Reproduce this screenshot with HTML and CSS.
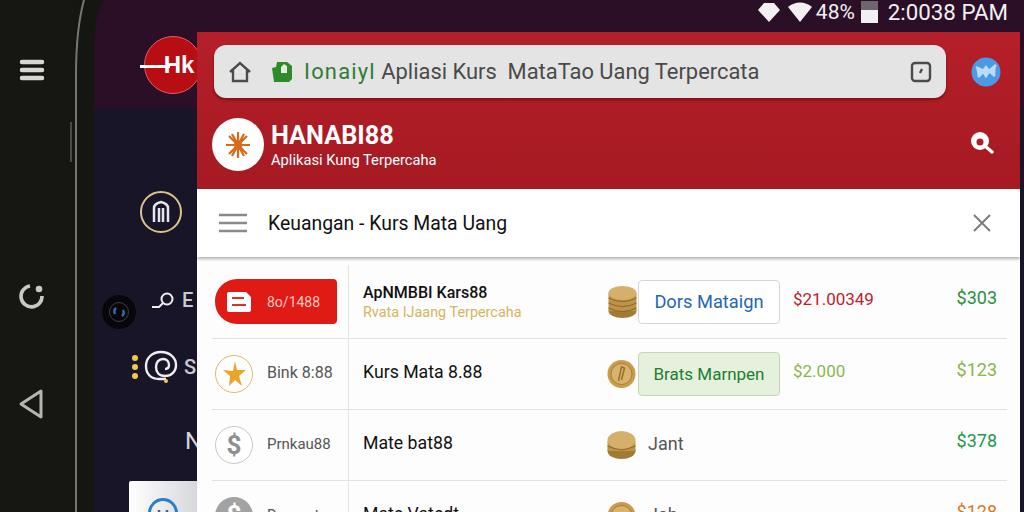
FILE: index.html
```html
<!DOCTYPE html>
<html lang="id">
<head>
<meta charset="utf-8">
<title>HANABI88</title>
<link rel="stylesheet" href="styles.css">
</head>
<body>
<div class="stage">
  <aside class="rail">
    <svg class="rail-menu" width="26" height="22" viewBox="0 0 26 22"><path d="M3 3h20M3 11h20M3 19h20" stroke="#d8d8d2" stroke-width="4.5" stroke-linecap="round" fill="none"/></svg>
    <svg class="rail-reload" width="28" height="28" viewBox="0 0 28 28"><path d="M12 4A10.500 10.500 0 1 0 24 14" stroke="#c9c9c3" stroke-width="3.600" fill="none"/><circle cx="21" cy="7" r="3.300" fill="#c9c9c3"/></svg>
    <svg class="rail-back" width="26" height="32" viewBox="0 0 26 32"><path d="M23 3L3 16l20 13z" stroke="#b5b5af" stroke-width="3" stroke-linejoin="round" fill="none"/></svg>
    <span class="side-key"></span>
  </aside>
  <svg class="bezel" width="20" height="512" viewBox="0 0 20 512"><path d="M10 0C4 22 2 45 2 75V512" stroke="#77776f" stroke-width="2" fill="none"/></svg>
  <main class="screen">
    <div class="screen-top">
      <div class="logo-disc"><span>Hk</span><i></i></div>
      <div class="status">
        <svg width="24" height="22" viewBox="0 0 24 22"><path d="M12 21L1 9l6-7h10l6 7z" fill="#f2f0f2"/></svg>
        <svg width="26" height="22" viewBox="0 0 26 22"><path d="M13 21L1 6c7-6 17-6 24 0z" fill="#f2f0f2"/></svg>
        <span class="pct">48%</span>
        <span class="battery"></span>
        <span class="clock">2:0038 PAM</span>
      </div>
    </div>
    <div class="screen-body">
      <div class="pin-ring"><svg width="22" height="24" viewBox="0 0 22 24"><path d="M4 22V8c0-3 3-5 7-6 4 1 7 3 7 6v14M9 22V8M13 22V8" stroke="#e6e6ef" stroke-width="2.500" fill="none"/></svg></div>
      <div class="side-item search-line"><svg width="26" height="20" viewBox="0 0 26 20"><circle cx="17" cy="9" r="5.500" stroke="#eee" stroke-width="2" fill="none"/><path d="M13 13l-4 4H2" stroke="#eee" stroke-width="2" fill="none"/></svg><span>E</span></div>
      <div class="lens"><svg width="22" height="22" viewBox="0 0 22 22"><circle cx="11" cy="11" r="9.500" stroke="#3a3f4a" fill="none"/><path d="M7 13a5 5 0 0 1 1-6M15 9a5 5 0 0 1-1 6" stroke="#2f6db5" stroke-width="2.400" fill="none"/></svg></div>
      <div class="side-item swirl-line">
        <span class="dots"><i></i><i></i><i></i></span>
        <svg width="34" height="34" viewBox="0 0 34 34"><path d="M22 29H15C7 29 2 24 2 16S8 2 17 2s15 6 15 13-5 11-11 11-9-4-9-9 3-8 7-8 6 3 6 6-2 4-4 4" stroke="#eee" stroke-width="2.400" fill="none"/><circle cx="22" cy="31" r="2" fill="#f3c64e"/></svg>
        <span>S</span>
      </div>
      <div class="side-n">N</div>
      <div class="mini-card"><svg width="32" height="32" viewBox="0 0 32 32"><circle cx="16" cy="16" r="13.500" stroke="#2b7fc4" stroke-width="3" fill="none"/><path d="M12 13v9M20 13v9" stroke="#55606b" stroke-width="2.500"/></svg></div>
    </div>
    <section class="card">
      <header class="red-head">
        <div class="url-row">
          <div class="url-bar">
            <svg class="home" width="24" height="24" viewBox="0 0 24 24"><path d="M2 12L12 3l10 9M5 10v11h14V10" stroke="#4b4b4b" stroke-width="2.400" fill="none"/></svg>
            <svg class="lock" width="22" height="22" viewBox="0 0 22 22"><path d="M1 7l4-1 1-5h10l5 4v13l-3 3H3z" fill="#2f8a2a"/><path d="M10 6l3-3 3 2v7h-6z" fill="#dfeedd"/></svg>
            <span class="url-text"><span class="url-green">Ionaiyl</span> Apliasi Kurs&nbsp; MataTao Uang Terpercata</span>
            <svg class="tab-icon" width="22" height="22" viewBox="0 0 22 22"><rect x="2" y="2" width="18" height="18" rx="3" stroke="#4b4b4b" stroke-width="2.400" fill="none"/><path d="M10 12l2-4" stroke="#4b4b4b" stroke-width="2.400"/></svg>
          </div>
          <svg class="globe" width="30" height="30" viewBox="0 0 30 30"><circle cx="15" cy="15" r="14.500" fill="#4a9be6"/><path d="M5 10l8 4-6 6M25 8l-7 6 6 5M12 14l3 5 3-5-3-4z" stroke="#bcdcf6" stroke-width="2.500" fill="#bcdcf6"/></svg>
        </div>
        <div class="brand-row">
          <div class="brand-disc"><svg width="28" height="28" viewBox="0 0 28 28"><path d="M14 1v26M2 14h24M5 5l18 18M23 5L5 23M8 3l12 22M20 3L8 25" stroke="#d9691b" stroke-width="2.200"/><circle cx="14" cy="14" r="4" fill="#d9691b"/></svg></div>
          <div class="brand-text">
            <strong>HANABI88</strong>
            <span>Aplikasi Kung Terpercaha</span>
          </div>
          <svg class="head-search" width="24" height="24" viewBox="0 0 24 24"><circle cx="10" cy="10" r="9" fill="#fff"/><circle cx="10" cy="11" r="3.500" fill="#b01e28"/><path d="M15 15l7 6" stroke="#fff" stroke-width="3.400" stroke-linecap="round"/></svg>
        </div>
      </header>
      <nav class="nav-bar">
        <svg width="28" height="20" viewBox="0 0 28 20"><path d="M0 2h28M0 10h28M0 18h28" stroke="#8a8a8a" stroke-width="2.500"/></svg>
        <span class="nav-title">Keuangan - Kurs Mata Uang</span>
        <svg width="20" height="20" viewBox="0 0 20 20"><path d="M2 2l16 16M18 2L2 18" stroke="#7d7d7d" stroke-width="2"/></svg>
      </nav>
      <div class="rows">
        <div class="row">
          <div class="cell-a"><div class="red-pill"><svg width="24" height="20" viewBox="0 0 24 20"><path d="M0 2a2 2 0 0 1 2-2h17l5 5v13a2 2 0 0 1-2 2H2a2 2 0 0 1-2-2z" fill="#fff"/><path d="M5 6h12M5 13h14" stroke="#d9312b" stroke-width="2"/></svg><span>8o/1488</span></div></div>
          <div class="cell-b"><b>ApNMBBI Kars88</b><small>Rvata IJaang Terpercaha</small></div>
          <svg class="coin" width="32" height="34" viewBox="0 0 32 34"><ellipse cx="17" cy="26" rx="14" ry="7" fill="#a37a33"/><rect x="3" y="8" width="28" height="18" fill="#bd9447"/><path d="M3 13q14 7 28 0M3 18q14 7 28 0M3 23q14 7 28 0" stroke="#8a6524" fill="none"/><ellipse cx="17" cy="8" rx="14" ry="7" fill="#d5b06a"/></svg>
          <div class="cell-btn"><span class="btn btn-white">Dors Mataign</span></div>
          <span class="price red">$21.00349</span>
          <span class="total green">$303</span>
        </div>
        <div class="row">
          <div class="cell-a"><svg class="bubble" width="38" height="40" viewBox="0 0 38 40"><circle cx="19" cy="20" r="18.500" fill="#fff" stroke="#e2b66f"/><path d="M20 7l2 9 9 0-7 6 3 10-7-6-6 6 1-10-7-6 10 1z" fill="#e9a429"/></svg><span class="bank">Bink 8:88</span></div>
          <div class="cell-b"><b class="plain">Kurs Mata 8.88</b></div>
          <svg class="coin" width="30" height="30" viewBox="0 0 30 30"><circle cx="15" cy="15" r="14" fill="#c99c4d"/><circle cx="15" cy="15" r="10.500" fill="#d8b36e" stroke="#a87b30"/><path d="M12 22l3-14 3 1-3 12" stroke="#9a6f2a" stroke-width="1.500" fill="none"/></svg>
          <div class="cell-btn"><span class="btn btn-green">Brats Marnpen</span></div>
          <span class="price lime">$2.000</span>
          <span class="total lime">$123</span>
        </div>
        <div class="row">
          <div class="cell-a"><svg class="bubble" width="38" height="40" viewBox="0 0 38 40"><circle cx="19" cy="20" r="18.500" fill="#fff" stroke="#c8c8c8"/><text x="19" y="29" text-anchor="middle" class="dollar">$</text></svg><span class="bank tight">Prnkau88</span></div>
          <div class="cell-b"><b class="plain">Mate bat88</b></div>
          <svg class="coin" width="32" height="30" viewBox="0 0 32 30"><ellipse cx="16" cy="21" rx="14" ry="8" fill="#a37a33"/><rect x="2" y="11" width="28" height="10" fill="#bd9447"/><path d="M2 16q14 7 28 0" stroke="#8a6524" fill="none"/><ellipse cx="16" cy="10" rx="14" ry="9" fill="#d5b06a"/></svg>
          <div class="cell-btn"><span class="btn-none">Jant</span></div>
          <span class="price"></span>
          <span class="total green2">$378</span>
        </div>
        <div class="row">
          <div class="cell-a"><svg class="bubble" width="38" height="40" viewBox="0 0 38 40"><circle cx="19" cy="20" r="19" fill="#a3a3a3"/><text x="19" y="28" text-anchor="middle" class="dollar white">$</text></svg><span class="bank tight">Dranaut</span></div>
          <div class="cell-b"><b class="plain">Mate Vatedt</b></div>
          <svg class="coin" width="30" height="30" viewBox="0 0 30 30"><circle cx="15" cy="15" r="14" fill="#c99c4d"/><circle cx="15" cy="15" r="10.500" fill="#d8b36e" stroke="#a87b30"/></svg>
          <div class="cell-btn"><span class="btn-none">Jah</span></div>
          <span class="price"></span>
          <span class="total orange">$128</span>
        </div>
      </div>
    </section>
  </main>
</div>
</body>
</html>
```
FILE: styles.css
```css
* { box-sizing: border-box; }
html, body { margin: 0; height: 512px; overflow: hidden; background: #161612; font-family: Roboto, "Liberation Sans", sans-serif; }
.stage { display: flex; width: 1024px; height: 512px; position: relative; overflow: hidden; background: #151511; }

.rail { width: 74px; flex: none; background: #161612; position: relative; }
.rail svg { position: absolute; }
.rail-menu { left: 19px; top: 59px; }
.rail-reload { left: 18px; top: 282px; }
.rail-back { left: 18px; top: 388px; }
.side-key { position: absolute; right: 2px; top: 122px; width: 2px; height: 40px; background: #4a4a45; }

.bezel { width: 20px; flex: none; background: #151511; }

.screen { flex: 1; position: relative; display: flex; flex-direction: column; background: #191528; border-top-left-radius: 12px 50px; overflow: hidden; }
.screen-top { height: 108px; background: #2a0f26; flex: none; display: flex; justify-content: flex-end; position: relative; }
.screen-body { flex: 1; position: relative; }

.status { position: absolute; right: 16px; top: 0; height: 24px; display: flex; align-items: center; color: #f2f0f2; }
.status svg { margin-right: 6px; }
.status svg + svg { margin-right: 3px; }
.pct { margin-right: 6px; font-size: 21px; }
.battery { width: 17px; height: 22px; margin-right: 10px; background: linear-gradient(#6f6570 0 42%, #f2f0f2 42%); }
.clock { font-size: 22.300px; }

.logo-disc { position: absolute; left: 50px; top: 36px; width: 58px; height: 58px; border-radius: 50%; background: #b80d12; border: 1px solid #d9606a; color: #fff; font: 700 24px/56px "Liberation Sans", sans-serif; text-align: center; }
.logo-disc span { display: block; padding-left: 12px; }
.logo-disc i { position: absolute; left: -5px; top: 28px; width: 30px; height: 3px; background: #fff; }

.pin-ring { position: absolute; left: 46px; top: 83px; width: 42px; height: 42px; border-radius: 50%; border: 2px solid #d9c58c; display: flex; align-items: center; justify-content: center; }
.lens { position: absolute; left: 8px; top: 187px; width: 34px; height: 34px; border-radius: 50%; background: #07070a; display: flex; align-items: center; justify-content: center; }
.side-item { position: absolute; display: flex; align-items: center; gap: 6px; color: #c9c9d2; font-size: 20px; font-weight: 500; }
.search-line { left: 56px; top: 180px; }
.swirl-line { left: 38px; top: 242px; gap: 6px; }
.dots { display: flex; flex-direction: column; gap: 3px; }
.dots i { width: 6px; height: 6px; border-radius: 50%; background: #f3c64e; }
.side-n { position: absolute; left: 91px; top: 319px; color: #d5d5dc; font-size: 24px; }
.mini-card { position: absolute; left: 35px; top: 373px; width: 80px; height: 60px; background: linear-gradient(90deg, #fff, #cfd0d6); padding: 16px 0 0 18px; border-radius: 2px; }

.card { position: absolute; left: 103px; top: 32px; width: 823px; height: 500px; background: #fdfdfd; display: flex; flex-direction: column; border-radius: 3px 3px 0 0; }
.red-head { height: 157px; flex: none; background: linear-gradient(#b51f2a, #a61a22); padding: 13px 19px 0 17px; display: flex; flex-direction: column; }
.url-row { display: flex; align-items: center; justify-content: space-between; }
.url-bar { width: 732px; height: 53px; background: #e4e4e4; border-radius: 12px; display: flex; align-items: center; padding: 0 14px; box-shadow: 0 2px 3px rgba(60,0,0,.45); }
.home { flex: none; }
.lock { flex: none; margin-left: 19px; }
.url-text { flex: 1; margin-left: 11px; font-size: 21.900px; color: #4a4a4a; white-space: nowrap; }
.url-green { color: #2e7d32; letter-spacing: 1.200px; }
.tab-icon { flex: none; }
.globe { flex: none; }
.brand-row { display: flex; align-items: center; margin-top: 20px; margin-left: -2px; }
.brand-disc { width: 52px; height: 53px; border-radius: 50%; background: #fff; display: flex; align-items: center; justify-content: center; flex: none; }
.brand-text { flex: 1; margin-left: 7px; padding-top: 4px; display: flex; flex-direction: column; color: #fff; }
.brand-text strong { font-size: 25.300px; line-height: 28px; font-weight: 700; }
.brand-text span { font-size: 14.700px; line-height: 21px; }
.head-search { flex: none; margin-right: 7px; margin-top: -3px; }

.nav-bar { height: 68px; flex: none; display: flex; align-items: center; padding: 0 28px 0 22px; background: #fff; box-shadow: 0 2px 3px rgba(0,0,0,.3); position: relative; }
.nav-title { flex: 1; margin-left: 21px; font-size: 19.400px; color: #111; }

.rows { margin-top: 8px; display: flex; flex-direction: column; }
.row { height: 71px; margin: 0 13px 0 15px; display: flex; align-items: center; border-bottom: 1px solid #e2e2e2; position: relative; }
.row:first-child { height: 74px; }
.cell-a { width: 137px; height: 100%; flex: none; border-right: 1px solid #e2e2e2; display: flex; align-items: center; }
.red-pill { width: 122px; height: 45px; margin-left: 3px; background: #e01a14; border-radius: 22px 4px 4px 22px; display: flex; align-items: center; padding-left: 12px; gap: 16px; color: #f6c9c4; font-size: 14px; white-space: nowrap; }
.bubble { margin-left: 3px; flex: none; }
.bank { margin-left: 14px; margin-bottom: 3px; font-size: 16px; color: #555; white-space: nowrap; }
.tight { font-size: 15px; }
.dollar { font: 700 26px Roboto, sans-serif; fill: #8f8f8f; }
.white { fill: #fff; }
.cell-b { width: 256px; flex: none; padding-left: 14px; display: flex; flex-direction: column; gap: 1px; }
.cell-b b { font-size: 16px; line-height: 21px; font-weight: 500; color: #111; white-space: nowrap; }
.cell-b b.plain { font-weight: 400; font-size: 17.700px; margin-bottom: 3px; }
.cell-b small { font-size: 14.400px; line-height: 18px; color: #d8b45e; white-space: nowrap; }
.coin { flex: none; width: 33px; }
.cell-btn { width: 155px; flex: none; padding-right: 13px; }
.btn { display: flex; align-items: center; justify-content: center; height: 44px; border-radius: 4px; font-size: 18.300px; white-space: nowrap; }
.btn-white { background: #fff; border: 1px solid #d6d6d6; color: #2467b0; }
.btn-green { background: #e5f1dc; border: 1px solid #c4d6b8; color: #1f7d2f; font-size: 17px; }
.btn-none { padding-left: 10px; margin-bottom: 4px; display: block; font-size: 18px; color: #555; }
.price { flex: 1; margin-bottom: 6px; font-size: 17px; white-space: nowrap; }
.total { flex: none; width: 60px; margin-right: 10px; margin-bottom: 9px; text-align: right; font-size: 18px; white-space: nowrap; }
.red { color: #c2202e; }
.green { color: #2a9040; }
.green2 { color: #1f9a4a; }
.lime { color: #8cb64c; }
.orange { color: #d97a1e; }
```
